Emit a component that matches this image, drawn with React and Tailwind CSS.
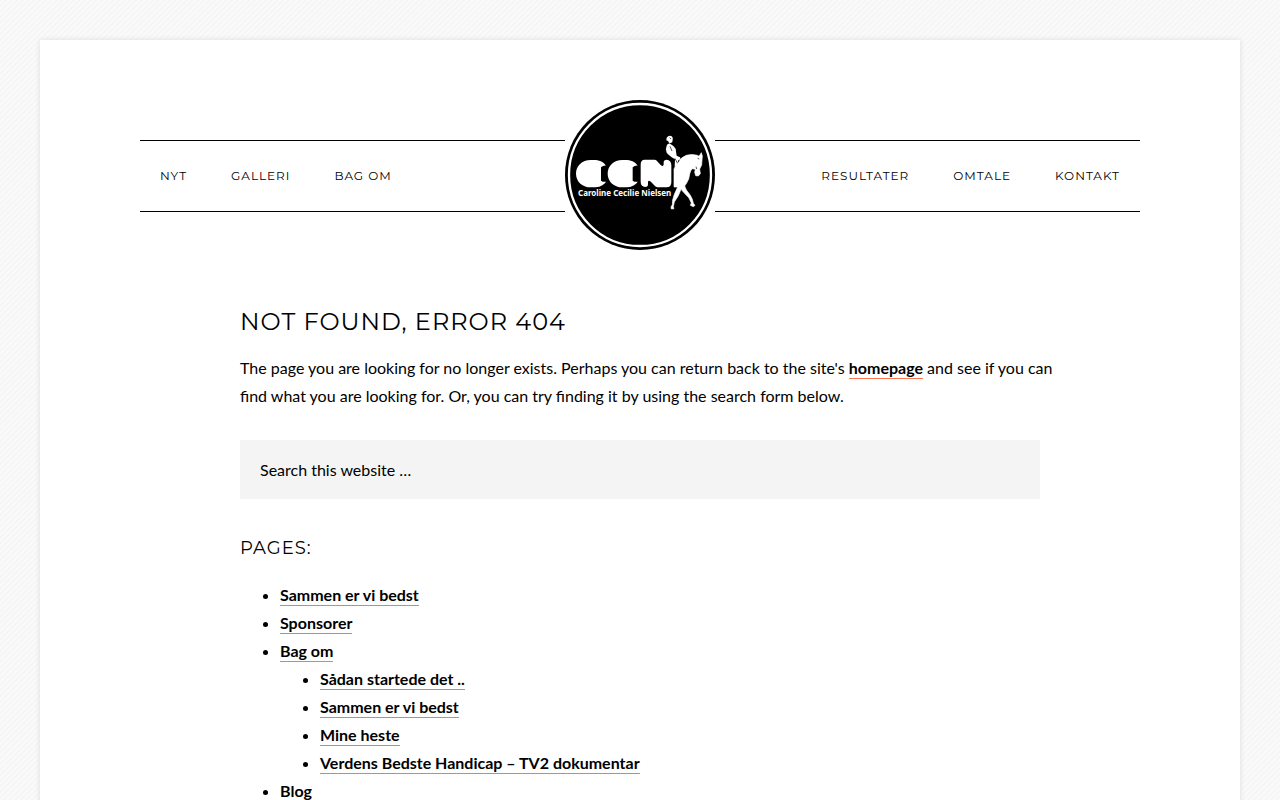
import React from 'react';

const leftLinks = ['Nyt', 'Galleri', 'Bag om'];
const rightLinks = ['Resultater', 'Omtale', 'Kontakt'];

const pages = [
  { title: 'Sammen er vi bedst' },
  { title: 'Sponsorer' },
  {
    title: 'Bag om',
    children: [
      { title: 'Sådan startede det ..' },
      { title: 'Sammen er vi bedst' },
      { title: 'Mine heste' },
      { title: 'Verdens Bedste Handicap – TV2 dokumentar' },
    ],
  },
  { title: 'Blog' },
];

function Logo() {
  return (
    <svg viewBox="15 15 450 450" className="block size-[150px]" role="img" aria-label="Caroline Cecilie Nielsen">
      <circle cx="240" cy="240" r="225" fill="#000" />
      <circle cx="240" cy="240" r="213" fill="none" stroke="#fff" strokeWidth="7" />
      <g fill="#fff">
        <path d="M138 212C130 200 117 195 101 195H92C66 195 48 213 48 236S66 277 92 277H101C117 277 130 272 138 260Q130 262 123 257V217Q130 211 138 212Z" />
        <path d="M233 212C225 200 212 195 196 195H187C161 195 143 213 143 236S161 277 187 277H196C212 277 225 272 233 260Q225 262 218 257V217Q225 211 233 212Z" />
        <path d="M254 194H284Q289 194 293 200L302 210Q310 217 311 208V202Q311 194 320 194Q334 196 334 211V262Q334 277 320 277H292Q286 276 282 270L271 259Q264 254 264 262V268Q264 276 256 276Q242 274 242 260V208Q242 194 254 194Z" />
        <path d="M320 128Q325 121 333 123Q340 126 338 134L337 141Q333 145 327 143L324 138L319 136Z" />
        <path d="M321 149L328 145Q335 149 341 154Q348 160 348 170L350 182L360 187L362 193L355 196L349 212L344 215L345 193L335 187Q325 179 320 173Q315 161 321 149Z" />
        <path stroke="#fff" strokeWidth="2" strokeLinejoin="round" d="M342 276V222Q347 209 357 200Q363 187 379 181Q395 176 412 181L417 184L424 173L427 183L426 195L425 210L419 222L421 236L415 243L407 242L404 232L406 223L397 221Q391 226 389 237Q388 252 380 264L374 273L379 285L391 301L397 313L400 325L405 331L400 335L391 331L394 324L387 309L371 292L363 283L355 302L343 321L340 335L342 341L334 342L333 336L337 329L338 315L343 298L353 276Z" />
        <text x="54" y="303" fontSize="24" className="font-['Noto_Sans','Open_Sans',sans-serif] font-bold">Caroline Cecilie Nielsen</text>
      </g>
      <path d="M329 128L333 132M330 154L336 168M345 190L351 203M413 190L418 192M408 215L410 222" stroke="#000" strokeWidth="2" />
    </svg>
  );
}

function NavLinks({ items, label, end }) {
  return (
    <nav aria-label={label} className="mt-10 min-w-0 flex-1 border-y border-black px-5">
      <ul className={end ? 'flex h-[70px] items-center justify-end gap-11' : 'flex h-[70px] items-center gap-11'}>
        {items.map((item) => (
          <li key={item}>
            <a href="#" className="block font-['Montserrat','Inter',sans-serif] text-xs tracking-[1px] text-black uppercase">{item}</a>
          </li>
        ))}
      </ul>
    </nav>
  );
}

function TextLink({ children }) {
  return <a href="#" className="border-b border-[#ff7550] pb-px font-bold">{children}</a>;
}

function PageList({ items }) {
  return (
    <ul className="list-disc pl-10">
      {items.map((item) => (
        <li key={item.title}>
          <TextLink>{item.title}</TextLink>
          {item.children && <PageList items={item.children} />}
        </li>
      ))}
    </ul>
  );
}

export default function App() {
  return (
    <div className="min-h-screen bg-[repeating-linear-gradient(135deg,#f4f4f4_0px,#fafafa_2px,#fafafa_3px,#f4f4f4_4px)] p-10 font-['Lato',sans-serif] text-base leading-7 text-black">
      <div className="mx-auto max-w-[1200px] bg-white px-[100px] pt-[60px] pb-[60px] shadow-[0_0_5px_#ddd]">
        <header className="flex items-start">
          <NavLinks items={leftLinks} label="Left" />
          <a href="#" className="shrink-0"><Logo /></a>
          <NavLinks items={rightLinks} label="Right" end />
        </header>
        <main className="mx-auto max-w-[800px] pt-14">
          <h1 className="mb-4 font-['Montserrat','Inter',sans-serif] text-2xl font-normal tracking-[1px] uppercase">Not found, error 404</h1>
          <p className="-mr-5 mb-[30px]">
            The page you are looking for no longer exists. Perhaps you can return back to the site's <TextLink>homepage</TextLink> and see if you can find what you are looking for. Or, you can try finding it by using the search form below.
          </p>
          <form role="search" onSubmit={(e) => e.preventDefault()}>
            <input type="search" aria-label="Search this website" placeholder="Search this website …" className="block h-[59px] w-full bg-[#f4f4f4] px-5 text-base text-black outline-none placeholder:text-black placeholder:opacity-100" />
          </form>
          <h2 className="mt-[35px] mb-[19px] font-['Montserrat','Inter',sans-serif] text-lg leading-7 font-normal tracking-[1px] uppercase">Pages:</h2>
          <PageList items={pages} />
        </main>
      </div>
    </div>
  );
}
